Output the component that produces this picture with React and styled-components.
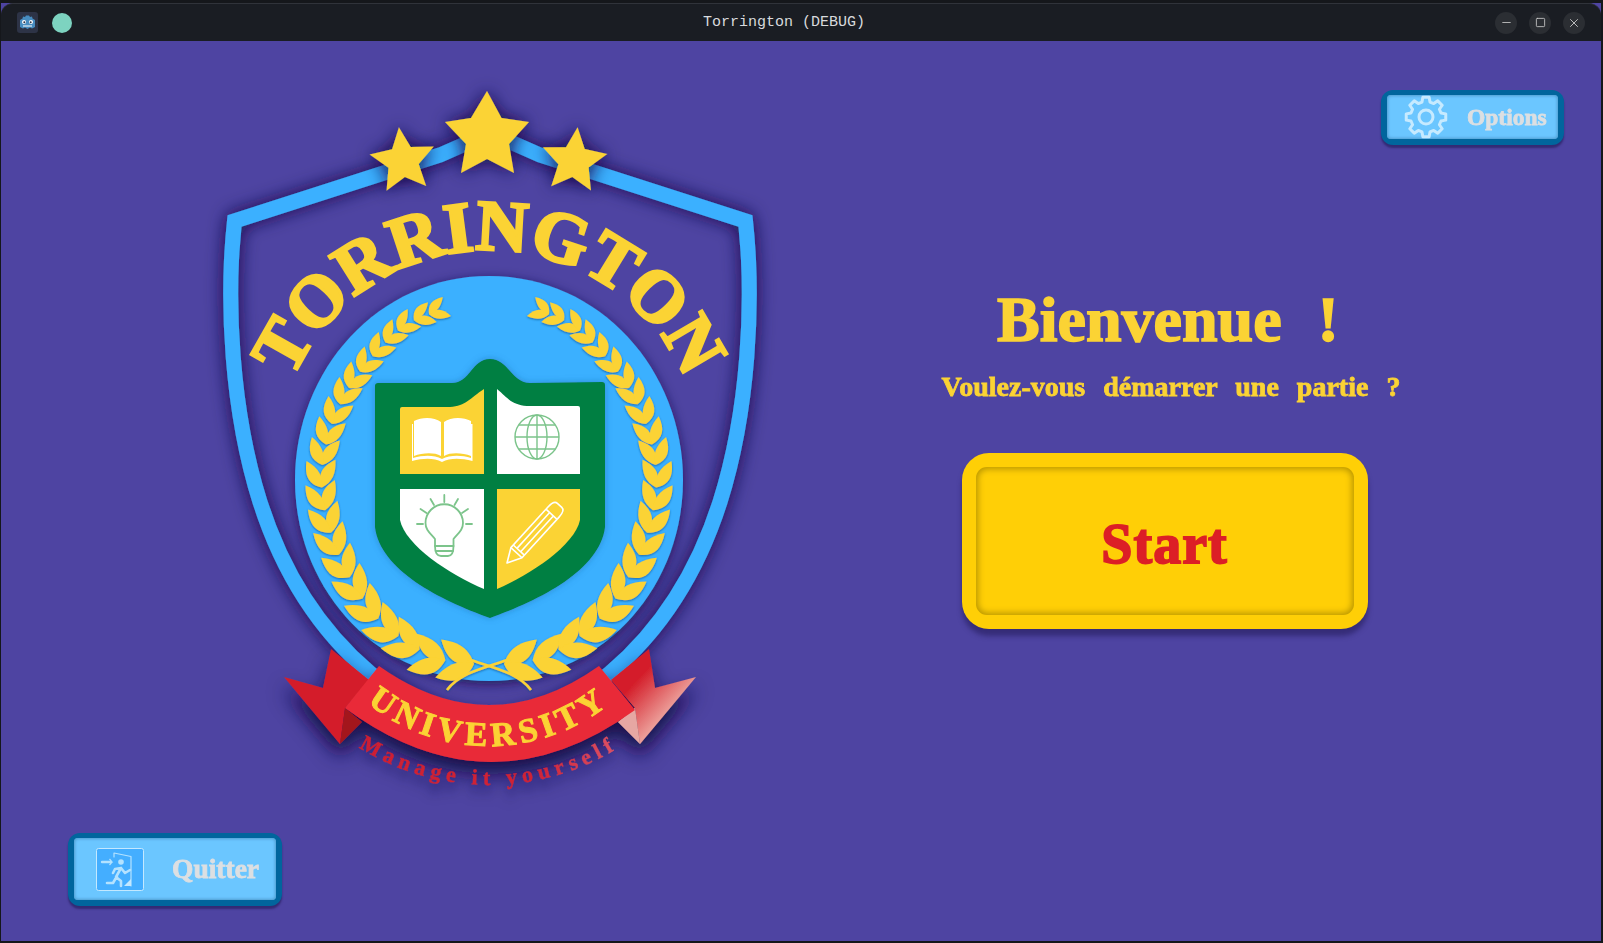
import React from "react";
import styled, { createGlobalStyle } from "styled-components";
import { Minus, Square, X } from "lucide-react";

const GlobalStyle = createGlobalStyle`
  html, body { margin: 0; padding: 0; background: #15171b; overflow: hidden; }
  * { box-sizing: border-box; }
`;

const display = `"Liberation Serif", "DejaVu Serif", serif`;
const yellow = "#fbd334";

const Window = styled.div`
  width: 1600px;
  height: 938px;
  margin: 3px 2px 2px 1px;
  display: flex;
  flex-direction: column;
  background: #4e44a2;
`;

const TitleBar = styled.header`
  height: 38px;
  flex: none;
  display: grid;
  grid-template-columns: 1fr auto 1fr;
  align-items: center;
  background: #1a1d23;
  border-top: 1px solid #30333a;
  border-radius: 12px 12px 0 0;
  padding: 0 16px;
`;

const TitleLeft = styled.div`
  display: flex;
  align-items: center;
  gap: 14px;
`;

const AppIcon = styled.div`
  width: 21px;
  height: 21px;
  border-radius: 3px;
  background: #2d3346;
  display: flex;
  align-items: center;
  justify-content: center;
`;

const StatusDot = styled.div`
  width: 20px;
  height: 20px;
  border-radius: 50%;
  background: #7dd3c0;
`;

const Title = styled.div`
  margin-right: 34px;
  font-family: "Liberation Mono", "DejaVu Sans Mono", monospace;
  font-size: 15px;
  color: #d8dadd;
`;

const Controls = styled.div`
  display: flex;
  justify-content: flex-end;
  gap: 12px;
`;

const Control = styled.div`
  width: 22px;
  height: 22px;
  border-radius: 50%;
  background: #2b2e33;
  color: #cfcfcf;
  display: flex;
  align-items: center;
  justify-content: center;
`;

const Screen = styled.main`
  flex: 1;
  display: grid;
  grid-template-columns: 790px 1fr;
`;

const LeftColumn = styled.section`
  display: flex;
  flex-direction: column;
  padding-top: 29px;
`;

const Logo = styled.svg`
  display: block;
  width: 590px;
  height: 750px;
  margin-left: 199px;
`;

const RightColumn = styled.section`
  display: flex;
  flex-direction: column;
`;

const Welcome = styled.div`
  display: flex;
  flex-direction: column;
  align-items: center;
  margin-right: 56px;
  margin-top: 140px;
`;

const Heading = styled.h1`
  margin: 0;
  font-family: ${display};
  font-weight: 700;
  font-size: 64px;
  line-height: 70px;
  word-spacing: 20px;
  color: ${yellow};
  -webkit-text-stroke: 1.6px ${yellow};
`;

const Question = styled.p`
  margin: 17px 0 0 6px;
  font-family: ${display};
  font-weight: 700;
  font-size: 28px;
  line-height: 30px;
  word-spacing: 11px;
  color: ${yellow};
  -webkit-text-stroke: 0.8px ${yellow};
`;

const StartButton = styled.button`
  width: 406px;
  height: 176px;
  margin: 51px 7px 0 0;
  padding: 14px;
  border: none;
  border-radius: 27px;
  background: #ffcf06;
  box-shadow: 0 7px 5px rgba(30, 22, 80, 0.5);
  display: flex;
`;

const StartFace = styled.span`
  flex: 1;
  display: flex;
  align-items: center;
  justify-content: center;
  padding-top: 6px;
  border-radius: 11px;
  background: #ffcf06;
  box-shadow: inset 0 0 6px 2px #b89500;
  font-family: ${display};
  font-weight: 700;
  font-size: 56px;
  letter-spacing: 1px;
  color: #dc1f26;
  -webkit-text-stroke: 1.8px #dc1f26;
`;

const MenuButton = styled.button`
  width: ${(p) => p.$width}px;
  height: ${(p) => p.$height}px;
  padding: 5px 6px 6px;
  border: none;
  border-radius: 12px;
  background: #01659d;
  box-shadow: 0 3px 2px rgba(30, 22, 80, 0.55);
  display: flex;
`;

const OptionsButton = styled(MenuButton)`
  align-self: flex-end;
  margin: 49px 37px 0 0;
`;

const QuitButton = styled(MenuButton)`
  margin: 13px 0 0 67px;
`;

const MenuFace = styled.span`
  flex: 1;
  display: flex;
  align-items: center;
  gap: ${(p) => p.$gap}px;
  padding-left: ${(p) => p.$pad}px;
  border-radius: 4px;
  background: #6bc6ff;
  box-shadow: inset 0 0 3px 1px #4f9ccf;
  font-family: ${display};
  font-weight: 700;
  font-size: ${(p) => p.$size}px;
  color: #dcdfe2;
  -webkit-text-stroke: 0.8px #dcdfe2;
`;

const CrestName = styled.text`
  font-family: ${display};
  font-weight: 700;
  font-size: 72px;
  letter-spacing: 0;
  fill: ${yellow};
  stroke: ${yellow};
  stroke-width: 3px;
`;

const RibbonName = styled.text`
  font-family: ${display};
  font-weight: 700;
  font-size: 34px;
  letter-spacing: 5px;
  fill: ${yellow};
  stroke: ${yellow};
  stroke-width: 1px;
`;

const Motto = styled.text`
  font-family: ${display};
  font-weight: 700;
  font-size: 22px;
  letter-spacing: 5.500px;
  fill: url(#mottoFill);
  stroke: url(#mottoFill);
  stroke-width: 0.4px;
`;

function starPoints(cx, cy, R, rot) {
  const pts = [];
  for (let i = 0; i < 10; i++) {
    const r = i % 2 === 0 ? R : R * 0.47;
    const a = ((rot + i * 36 - 90) * Math.PI) / 180;
    pts.push(`${(cx + r * Math.cos(a)).toFixed(1)},${(cy + r * Math.sin(a)).toFixed(1)}`);
  }
  return pts.join(" ");
}

// wreath: walk a spline from the base up to the tip and drop a pair of leaves at each step
const spine = [
  [474, 664], [430, 655], [375, 615], [335, 545], [322, 470], [345, 395], [395, 333], [432, 313],
];

function sampleSpine() {
  const out = [];
  for (let i = 0; i < spine.length - 1; i++) {
    const p0 = spine[Math.max(i - 1, 0)];
    const p1 = spine[i];
    const p2 = spine[i + 1];
    const p3 = spine[Math.min(i + 2, spine.length - 1)];
    for (let k = 0; k < 30; k++) {
      const t = k / 30;
      const f = (a, b, c, d) =>
        0.5 * (2 * b + (c - a) * t + (2 * a - 5 * b + 4 * c - d) * t * t + (3 * b - a - 3 * c + d) * t * t * t);
      out.push([f(p0[0], p1[0], p2[0], p3[0]), f(p0[1], p1[1], p2[1], p3[1])]);
    }
  }
  return out;
}

function buildLeaves() {
  const pts = sampleSpine();
  let total = 0;
  const dist = [0];
  for (let i = 1; i < pts.length; i++) {
    total += Math.hypot(pts[i][0] - pts[i - 1][0], pts[i][1] - pts[i - 1][1]);
    dist.push(total);
  }
  const leaves = [];
  let at = 0;
  let idx = 0;
  while (at < total - 2) {
    while (idx < pts.length - 2 && dist[idx] < at) idx++;
    const u = at / total;
    const [x, y] = pts[idx];
    const next = pts[Math.min(idx + 3, pts.length - 1)];
    const ang = (Math.atan2(next[1] - y, next[0] - x) * 180) / Math.PI;
    const len = 41 - 19 * u;
    const w = 13 - 6 * u;
    leaves.push({ x, y, ang: ang + 28, len, w });
    leaves.push({ x, y, ang: ang - 28, len, w });
    at += 28 - 11 * u;
  }
  return leaves;
}

const leaves = buildLeaves();

function Branch() {
  return (
    <g fill={yellow}>
      {leaves.map((l, i) => (
        <path
          key={i}
          transform={`translate(${l.x.toFixed(1)} ${l.y.toFixed(1)}) rotate(${l.ang.toFixed(1)})`}
          d={`M0 0 C ${l.len * 0.3} ${-l.w} ${l.len * 0.6} ${-l.w} ${l.len} 0 C ${l.len * 0.6} ${l.w * 0.7} ${l.len * 0.3} ${l.w * 0.7} 0 0Z`}
        />
      ))}
      <path d="M468 659 C 490 667 518 672 531 690" fill="none" stroke={yellow} strokeWidth="2.600" />
    </g>
  );
}

const bandHalf = "M490 133 L440 155 L234.500 221 C 226 300 231 410 260 502 C 285 580 325 635 370 673 C 405 703 450 725 490 735";

function Crest() {
  return (
    <Logo viewBox="200 70 590 750">
      <defs>
        <filter id="soft" x="-20%" y="-20%" width="140%" height="140%">
          <feDropShadow dx="0" dy="0" stdDeviation="9" floodColor="#171047" floodOpacity="1" />
        </filter>
        <filter id="oval" x="-20%" y="-20%" width="140%" height="140%">
          <feDropShadow dx="0" dy="3" stdDeviation="6" floodColor="#171047" floodOpacity="0.8" />
        </filter>
        <filter id="drop" x="-30%" y="-30%" width="160%" height="180%">
          <feDropShadow dx="0" dy="12" stdDeviation="10" floodColor="#171047" floodOpacity="1" />
        </filter>
        <filter id="mottoShadow" x="-20%" y="-50%" width="140%" height="220%">
          <feDropShadow dx="0" dy="9" stdDeviation="6" floodColor="#171047" floodOpacity="0.5" />
        </filter>
        <filter id="leaf" x="-10%" y="-10%" width="120%" height="120%">
          <feDropShadow dx="0" dy="1" stdDeviation="1.200" floodColor="#14508c" floodOpacity="0.75" />
        </filter>
        <filter id="green" x="-10%" y="-10%" width="120%" height="120%">
          <feDropShadow dx="0" dy="0" stdDeviation="3" floodColor="#1a6aa8" floodOpacity="0.55" />
        </filter>
        <linearGradient id="tailFade" gradientUnits="userSpaceOnUse" x1="630" y1="688" x2="662" y2="718">
          <stop offset="0" stopColor="#d41f2b" />
          <stop offset="1" stopColor="#ec9d98" />
        </linearGradient>
        <linearGradient id="mottoFill" gradientUnits="userSpaceOnUse" x1="360" y1="0" x2="612" y2="0">
          <stop offset="0" stopColor="#cf1f30" />
          <stop offset="0.7" stopColor="#cf2236" />
          <stop offset="1" stopColor="#db4f62" />
        </linearGradient>
        <path id="crestArc" d="M275 464 A214 214 0 0 1 703 464" />
        <path id="ribbonArc" d="M295 552 A194 194 0 0 0 683 552" />
        <path id="mottoArc" d="M245 541 A244 244 0 0 0 733 541" />
      </defs>

      <g filter="url(#soft)">
        <g fill="none" stroke="#3bb0ff" strokeWidth="15" strokeLinejoin="miter">
          <path d={bandHalf} />
          <path d={bandHalf} transform="translate(980 0) scale(-1 1)" />
        </g>
      </g>

      <CrestName textAnchor="middle">
        <textPath href="#crestArc" startOffset="50%">TORRINGTON</textPath>
      </CrestName>

      <path
        filter="url(#oval)"
        fill="#3bb0ff"
        d="M489 276 C 600 276 683 370 683 480 C 683 590 600 681 489 681 C 378 681 295 590 295 480 C 295 370 378 276 489 276Z"
      />

      <g filter="url(#leaf)">
        <Branch />
        <g transform="translate(978 0) scale(-1 1)">
          <Branch />
        </g>
      </g>

      <path
        filter="url(#green)"
        fill="#047f43"
        d="M378 383 L452 383 C 470 383 472 359 490 359 C 508 359 512 383 530 383 L602 382 Q605 382 605 385 L605 527 C 600 570 540 600 490 618 C 440 600 380 570 375 527 L375 386 Q375 383 378 383Z"
      />

      <path fill={yellow} d="M400 409 Q400 407 402 407 L450 407 C 466 406 470 398 484 389 L484 474 L400 474Z" />
      <path fill="#fff" d="M497 389 C 508 398 512 406 530 406 L578 406 Q580 406 580 408 L580 474 L497 474Z" />
      <path fill="#fff" d="M400 489 L484 489 L484 589 C 450 575 405 545 400 520Z" />
      <path fill={yellow} d="M497 489 L580 489 L580 520 C 575 545 530 575 497 589Z" />

      {/* book */}
      <g fill="#fff">
        <path d="M414 421 C 422 417 434 417 441 422 L441 456 C 434 452 422 453 414 456Z" />
        <path d="M444 422 C 451 417 463 417 471 421 L471 456 C 463 453 451 452 444 456Z" />
        <path d="M412 424 L413 424 L413 458 C 424 455 434 455 442 459 C 450 455 461 455 471 458 L471 424 L472.500 424 L472.500 461 C 460 458 450 458 442 462 C 434 458 424 458 412 461Z" />
      </g>

      {/* globe */}
      <g fill="none" stroke="#7cc48b" strokeWidth="1.400">
        <circle cx="537" cy="437" r="22" />
        <ellipse cx="537" cy="437" rx="10" ry="22" />
        <path d="M537 415 L537 459 M515 437 L559 437 M519 425 L555 425 M519 449 L555 449" />
      </g>

      {/* bulb */}
      <g fill="none" stroke="#7cc48b" strokeWidth="1.800" strokeLinecap="round">
        <path d="M435 546 L435 539 C 430 533 425.500 530 425.500 523 A18.700 18.700 0 0 1 463 523 C 463 530 458.500 533 453.500 539 L453.500 546 Q453.500 556 448 556 L441 556 Q435 556 435 546Z" />
        <path d="M435 546 L453.500 546 M436 551 L453 551" />
        <path d="M444.300 495 L444.300 502 M430.500 499 L434 505 M420.500 509 L426.500 513 M417 524 L423 524 M458 499 L454.500 505 M468 509 L462 513 M472 524 L466 524" />
      </g>

      {/* pencil */}
      <g transform="translate(507 563) rotate(-47.6)" fill="none" stroke="#fff" strokeWidth="1.600" strokeLinejoin="round">
        <path d="M0 0 L14 -7.500 L69 -7.500 Q78 -7.500 78 -3 L78 3 Q78 7.500 69 7.500 L14 7.500Z" />
        <path d="M14 -7.500 L14 7.500 M17.500 -7.500 L17.500 7.500 M66 -7.500 L66 7.500 M17.500 -2.500 L66 -2.500 M17.500 2.500 L66 2.500" />
      </g>

      {/* stars */}
      <g fill={yellow} filter="url(#soft)">
        <polygon points={starPoints(403, 161, 34, -7)} />
        <polygon points={starPoints(574, 161, 34, 6)} />
        <polygon points="487,91 501.500,118 529,122 509,144 514,173 487,159 461,173 466,144 445,122 471,118" />
      </g>

      {/* ribbon */}
      <g filter="url(#drop)">
        <path fill="#d41f2b" d="M331 649 L369 680 L345 708 L340 744 L284 677 L323 688Z" />
        <path fill="#a3171f" d="M345 708 L362 722 L340 744Z" />
        <path fill="url(#tailFade)" d="M649 649 L611 680 L635 708 L640 744 L696 677 L655 688Z" />
        <path fill="#e6a7a3" d="M635 708 L618 722 L640 744Z" />
        <path fill="#e92c38" d="M379 666 Q489 744 599 666 L635 710 Q490 815 345 708Z" />
      </g>
      <RibbonName textAnchor="middle">
        <textPath href="#ribbonArc" startOffset="50%">UNIVERSITY</textPath>
      </RibbonName>
      <g filter="url(#mottoShadow)">
        <Motto textAnchor="middle">
          <textPath href="#mottoArc" startOffset="50%">Manage it yourself</textPath>
        </Motto>
      </g>
    </Logo>
  );
}

function gearPath(cx, cy) {
  const teeth = 8;
  const pts = [];
  for (let i = 0; i < teeth; i++) {
    const c = (i * 360) / teeth - 90;
    [[-15, 15.5], [-9, 20], [9, 20], [15, 15.5]].forEach(([d, r]) => {
      const a = ((c + d) * Math.PI) / 180;
      pts.push(`${(cx + r * Math.cos(a)).toFixed(2)} ${(cy + r * Math.sin(a)).toFixed(2)}`);
    });
  }
  return `M${pts.join(" L")}Z`;
}

function GearIcon() {
  return (
    <svg width="46" height="46" viewBox="0 0 46 46" fill="none" stroke="#c6eaff" strokeLinejoin="round">
      <path d={gearPath(23, 23)} strokeWidth="3" />
      <circle cx="23" cy="23" r="7" strokeWidth="3" />
    </svg>
  );
}

const ExitFrame = styled.svg`
  flex: none;
  display: block;
  width: 48px;
  height: 43px;
`;

function ExitIcon() {
  return (
    <ExitFrame viewBox="0 0 48 43">
      <rect x="0.500" y="0.500" width="47" height="42" rx="2" fill="#44aeff" stroke="#c3e8ff" />
      <g fill="none" stroke="#b4e2ff" strokeLinecap="round" strokeLinejoin="round">
        <path d="M18 9 L18 5 L35 8.500 L35 38" strokeWidth="1.200" />
        <path d="M6 14 L14 14" strokeWidth="2.400" />
        <path d="M25 20 L20 29 L25 33 L25 38 M21 28 L17 35 L11 35 M25 20 L29 25 L34 22 M25 20 L19 21 L17 25" strokeWidth="2.600" />
      </g>
      <path d="M12 14 L16 14 L13.500 11 M13.500 17 L16 14" fill="none" stroke="#b4e2ff" strokeWidth="1.200" />
      <circle cx="25" cy="14" r="2.800" fill="#b4e2ff" />
      <path d="M28 38 L35 31 L35 38Z" fill="#c3e8ff" />
    </ExitFrame>
  );
}

function GodotMark() {
  return (
    <svg width="17" height="15" viewBox="0 0 17 15">
      <path
        fill="#478cbf"
        d="M1 5 L3.500 3.500 L4 1.500 L6 2 L7 0.500 L10 0.500 L11 2 L13 1.500 L13.500 3.500 L16 5 L16 12 L13 13.500 L11 12.500 L8.500 14 L6 12.500 L4 13.500 L1 12Z"
      />
      <circle cx="5" cy="7" r="2" fill="#fff" />
      <circle cx="12" cy="7" r="2" fill="#fff" />
      <circle cx="5.300" cy="7.200" r="1" fill="#2d3346" />
      <circle cx="11.700" cy="7.200" r="1" fill="#2d3346" />
      <path d="M4 11 L13 11" stroke="#fff" strokeWidth="1" />
    </svg>
  );
}

export default function App() {
  return (
    <>
      <GlobalStyle />
      <Window>
        <TitleBar>
          <TitleLeft>
            <AppIcon>
              <GodotMark />
            </AppIcon>
            <StatusDot />
          </TitleLeft>
          <Title>Torrington (DEBUG)</Title>
          <Controls>
            <Control><Minus size={13} strokeWidth={1.5} /></Control>
            <Control><Square size={11} strokeWidth={1.8} /></Control>
            <Control><X size={14} strokeWidth={1.5} /></Control>
          </Controls>
        </TitleBar>
        <Screen>
          <LeftColumn>
            <Crest />
            <QuitButton $width={214} $height={73}>
              <MenuFace $pad={22} $gap={28} $size={27.5}>
                <ExitIcon />
                Quitter
              </MenuFace>
            </QuitButton>
          </LeftColumn>
          <RightColumn>
            <OptionsButton $width={183} $height={55}>
              <MenuFace $pad={16} $gap={18} $size={23.5}>
                <GearIcon />
                Options
              </MenuFace>
            </OptionsButton>
            <Welcome>
              <Heading>Bienvenue !</Heading>
              <Question>Voulez-vous démarrer une partie ?</Question>
              <StartButton>
                <StartFace>Start</StartFace>
              </StartButton>
            </Welcome>
          </RightColumn>
        </Screen>
      </Window>
    </>
  );
}
